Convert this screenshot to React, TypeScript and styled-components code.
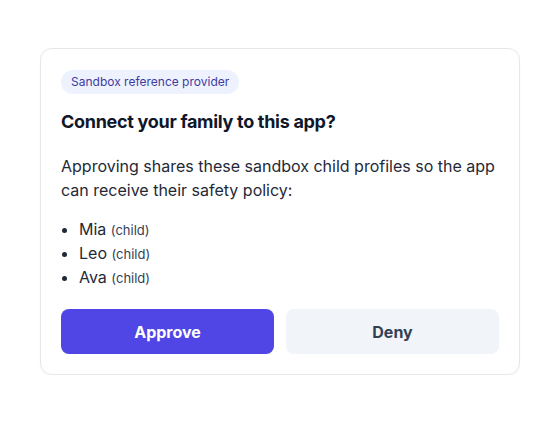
import styled, { createGlobalStyle } from "styled-components";

const GlobalStyle = createGlobalStyle`
  body {
    margin: 0;
    background: #ffffff;
    font-family: Inter, "Noto Sans", sans-serif;
    color: #0f172a;
  }
`;

const Page = styled.div`
  display: flex;
  justify-content: center;
  padding-top: 48px;
`;

const Card = styled.div`
  width: 480px;
  box-sizing: border-box;
  border: 1px solid #e5e7eb;
  border-radius: 12px;
  background: #ffffff;
  padding: 21px 20px 20px;
  box-shadow: 0 1px 2px rgba(15, 23, 42, 0.04);
`;

const Badge = styled.span`
  display: inline-block;
  padding: 4px 10px;
  border-radius: 999px;
  background: #eef2ff;
  color: #3f3a9e;
  font-size: 12px;
  line-height: 16px;
`;

const Title = styled.h1`
  margin: 16px 0 0;
  font-size: 18px;
  line-height: 24px;
  font-weight: 700;
  letter-spacing: -0.3px;
  color: #0f172a;
`;

const Text = styled.p`
  margin: 20px 0 0;
  font-size: 16px;
  line-height: 24px;
  color: #1f2937;
`;

const List = styled.ul`
  margin: 15px 0 0;
  padding-left: 18px;
  font-size: 16px;
  line-height: 24px;
  color: #1f2937;
`;

const Role = styled.span`
  font-size: 13px;
  line-height: 1;
  color: #334155;
`;

const ButtonRow = styled.div`
  display: grid;
  grid-template-columns: 1fr 1fr;
  gap: 12px;
  margin-top: 20px;
`;

const Button = styled.button<{ $primary?: boolean }>`
  height: 45px;
  border: none;
  border-radius: 8px;
  font-family: inherit;
  font-size: 16px;
  font-weight: 700;
  cursor: pointer;
  background: ${(p) => (p.$primary ? "#4f46e5" : "#f1f5f9")};
  color: ${(p) => (p.$primary ? "#ffffff" : "#334155")};
`;

const children = ["Mia", "Leo", "Ava"];

export default function App() {
  return (
    <>
      <GlobalStyle />
      <Page>
        <Card>
          <Badge>Sandbox reference provider</Badge>
          <Title>Connect your family to this app?</Title>
          <Text>
            Approving shares these sandbox child profiles so the app can
            receive their safety policy:
          </Text>
          <List>
            {children.map((name) => (
              <li key={name}>
                {name} <Role>(child)</Role>
              </li>
            ))}
          </List>
          <ButtonRow>
            <Button $primary>Approve</Button>
            <Button>Deny</Button>
          </ButtonRow>
        </Card>
      </Page>
    </>
  );
}
